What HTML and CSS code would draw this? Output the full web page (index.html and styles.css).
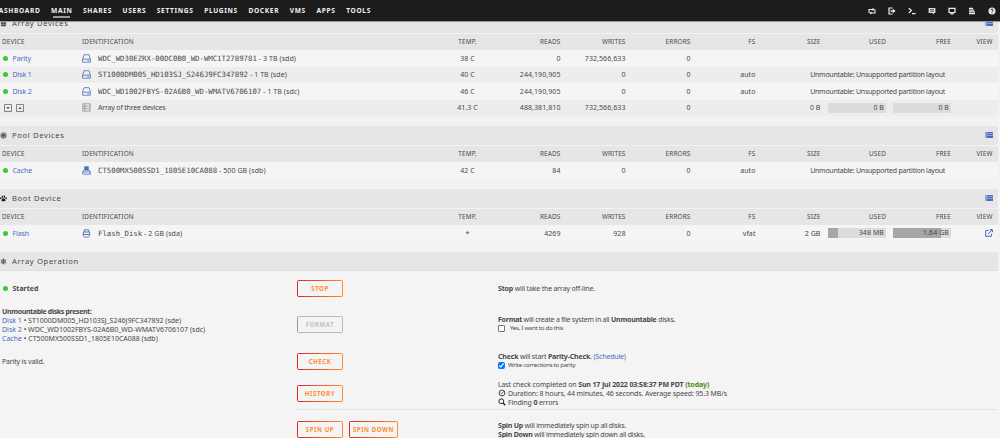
FILE: index.html
```html
<!DOCTYPE html>
<html lang="en">
<head>
    <meta charset="UTF-8">
    <title>Main</title>
    <link rel="stylesheet" href="styles.css">
</head>
<body>
<div class="header">
    <ul class="nav">
        <li>DASHBOARD</li>
        <li class="active">MAIN</li>
        <li>SHARES</li>
        <li>USERS</li>
        <li>SETTINGS</li>
        <li>PLUGINS</li>
        <li>DOCKER</li>
        <li>VMS</li>
        <li>APPS</li>
        <li>TOOLS</li>
    </ul>
    <div class="tools">
        <svg viewBox="0 0 8 8"><path d="M1 6V2.500h4.500M7 2.500v3.500H2.500" fill="none" stroke="#eee" stroke-width="1.1"/><path d="M4.600.8l2.200 1.700-2.200 1.600zM3.400 4.400L1.200 6l2.200 1.600z" fill="#eee"/></svg>
        <svg viewBox="0 0 8 8"><path d="M4.600 1H1v6h3.600" fill="none" stroke="#eee" stroke-width="1.2"/><path d="M2.600 3.200h2.200V1.700L7.600 4 4.800 6.300V4.800H2.600z" fill="#eee"/></svg>
        <svg viewBox="0 0 8 8"><path d="M.8 1.200L3.400 3.600.8 6M4 6.700h3.600" fill="none" stroke="#eee" stroke-width="1.2"/></svg>
        <svg viewBox="0 0 8 8"><path d="M.6 1h6.800v5H6v1.500L4.400 6H.6z" fill="#ddd"/><path d="M2 2.600h4M2 4.300h4" stroke="#1c1c1c" stroke-width=".7"/></svg>
        <svg viewBox="0 0 8 8"><path d="M1 1.300h6v4.200H1z" fill="none" stroke="#eee" stroke-width="1.2"/><path d="M2.200 6.200h3.600v1.200H2.200z" fill="#eee"/></svg>
        <svg viewBox="0 0 8 8"><path d="M1 1.300h4M1 3.100h5M1 4.900h6M1 6.700h6" stroke="#eee" stroke-width="1.3"/></svg>
        <svg viewBox="0 0 8 8"><circle cx="4" cy="4" r="3.500" fill="#eee"/><path d="M2.900 3.100c0-1.500 2.300-1.400 2.300 0C5.200 3.900 4 3.800 4 4.800M4 5.400v.9" fill="none" stroke="#1c1c1c" stroke-width=".9"/></svg>
    </div>
</div>

<div class="section array">
    <div class="title">
        <svg class="ico" viewBox="0 0 8 8"><path d="M1 2c0-1.600 6-1.600 6 0v4.400c0 1.400-6 1.400-6 0z" fill="#444"/><path d="M1 3.200h6M1 5.200h6" stroke="#e6e6e6" stroke-width=".5"/></svg>
        <span>Array Devices</span>
        <svg class="list" viewBox="0 0 8 6"><path d="M0 0h8v6H0z" fill="#8fa5d6"/><path d="M2 .5h6M2 2.500h6M2 4.500h6M2 5.500h6" stroke="#486dba"/></svg>
    </div>
    <div class="row thead">
        <span>DEVICE</span><span>IDENTIFICATION</span><span>TEMP.</span><span>READS</span><span>WRITES</span><span>ERRORS</span><span>FS</span><span>SIZE</span><span>USED</span><span>FREE</span><span>VIEW</span>
    </div>
    <div class="row">
        <span class="dev"><i class="orb"></i><a>Parity</a></span>
        <span class="id"><svg viewBox="0 0 9 9"><path d="M.6 5L2 .7h5L8.400 5M.6 5.200h7.800v3H.6zM5.500 6.700h1.700" fill="none" stroke="#486dba" stroke-width=".8"/></svg><b class="mono">WDC_WD30EZRX-00DC0B0_WD-WMC1T2789781</b> - 3 TB (sdd)</span>
        <span>38 C</span><span>0</span><span>732,566,633</span><span>0</span>
    </div>
    <div class="row even">
        <span class="dev"><i class="orb"></i><a>Disk 1</a></span>
        <span class="id"><svg viewBox="0 0 9 9"><path d="M.6 5L2 .7h5L8.400 5M.6 5.200h7.800v3H.6zM5.500 6.700h1.700" fill="none" stroke="#486dba" stroke-width=".8"/></svg><b class="mono">ST1000DM005_HD103SJ_S246J9FC347892</b> - 1 TB (sde)</span>
        <span>40 C</span><span>244,190,905</span><span>0</span><span>0</span><span>auto</span><span class="unmount">Unmountable: Unsupported partition layout</span>
    </div>
    <div class="row">
        <span class="dev"><i class="orb"></i><a>Disk 2</a></span>
        <span class="id"><svg viewBox="0 0 9 9"><path d="M.6 5L2 .7h5L8.400 5M.6 5.200h7.800v3H.6zM5.500 6.700h1.700" fill="none" stroke="#486dba" stroke-width=".8"/></svg><b class="mono">WDC_WD1002FBYS-02A6B0_WD-WMATV6706107</b> - 1 TB (sdc)</span>
        <span>46 C</span><span>244,190,905</span><span>0</span><span>0</span><span>auto</span><span class="unmount">Unmountable: Unsupported partition layout</span>
    </div>
    <div class="row even">
        <span class="dev toggles">
            <svg viewBox="0 0 8 8"><path d="M.5.5h7v7h-7z" fill="none" stroke="#777" stroke-width=".9"/><path d="M2.200 3h3.600L4 5.200z" fill="#666"/></svg>
            <svg viewBox="0 0 8 8"><path d="M.5.5h7v7h-7z" fill="none" stroke="#777" stroke-width=".9"/><path d="M2.200 5h3.600L4 2.800z" fill="#666"/></svg>
        </span>
        <span class="id"><svg viewBox="0 0 9 9"><path d="M.8.8h7.400v7.400H.8zM.8 3.300h7.400M.8 5.700h7.400M2.900.8v7.400" fill="none" stroke="#888" stroke-width=".7"/></svg><em>Array of three devices</em></span>
        <span>41.3 C</span><span>488,381,810</span><span>732,566,633</span><span>0</span><span></span><span>0 B</span>
        <span class="bar">0 B</span>
        <span class="bar">0 B</span>
    </div>
</div>

<div class="section">
    <div class="title">
        <svg class="ico" viewBox="0 0 8 8"><circle cx="4" cy="4" r="3.100" fill="#999" stroke="#555" stroke-width=".8"/><circle cx="4" cy="4" r="1.300" fill="#333"/></svg>
        <span>Pool Devices</span>
        <svg class="list" viewBox="0 0 8 6"><path d="M0 0h8v6H0z" fill="#8fa5d6"/><path d="M2 .5h6M2 2.500h6M2 4.500h6M2 5.500h6" stroke="#486dba"/></svg>
    </div>
    <div class="row thead">
        <span>DEVICE</span><span>IDENTIFICATION</span><span>TEMP.</span><span>READS</span><span>WRITES</span><span>ERRORS</span><span>FS</span><span>SIZE</span><span>USED</span><span>FREE</span><span>VIEW</span>
    </div>
    <div class="row">
        <span class="dev"><i class="orb"></i><a>Cache</a></span>
        <span class="id"><svg viewBox="0 0 9 9"><path d="M2.300.3h4.400v4.300H2.300z" fill="#486dba"/><path d="M2.300 3.500L.7 5.900v2.300h7.600V5.900L6.700 3.500M.7 6h7.600" fill="none" stroke="#486dba" stroke-width=".8"/></svg><b class="mono">CT500MX500SSD1_1805E10CA088</b> - 500 GB (sdb)</span>
        <span>42 C</span><span>84</span><span>0</span><span>0</span><span>auto</span><span class="unmount">Unmountable: Unsupported partition layout</span>
    </div>
</div>

<div class="section">
    <div class="title">
        <svg class="ico" viewBox="0 0 8 8"><path d="M4 3.700c1.200 0 2.400 1.600 2.400 2.700S5 7 4 7s-2.400.6-2.400-.6S2.800 3.700 4 3.700z" fill="#222"/><g fill="#222"><ellipse cx="1" cy="3.700" rx=".9" ry="1.200"/><ellipse cx="2.900" cy="2" rx=".9" ry="1.300"/><ellipse cx="5.100" cy="2" rx=".9" ry="1.300"/><ellipse cx="7" cy="3.700" rx=".9" ry="1.200"/></g></svg>
        <span>Boot Device</span>
        <svg class="list" viewBox="0 0 8 6"><path d="M0 0h8v6H0z" fill="#8fa5d6"/><path d="M2 .5h6M2 2.500h6M2 4.500h6M2 5.500h6" stroke="#486dba"/></svg>
    </div>
    <div class="row thead">
        <span>DEVICE</span><span>IDENTIFICATION</span><span>TEMP.</span><span>READS</span><span>WRITES</span><span>ERRORS</span><span>FS</span><span>SIZE</span><span>USED</span><span>FREE</span><span>VIEW</span>
    </div>
    <div class="row">
        <span class="dev"><i class="orb"></i><a>Flash</a></span>
        <span class="id"><svg viewBox="0 0 9 9"><path d="M2.300 3V.8h4.400V3M1.300 3h6.400v3.600c0 2.200-6.400 2.200-6.400 0zM1.300 5.500h6.400" fill="none" stroke="#486dba" stroke-width=".9"/></svg><b class="mono">Flash_Disk</b> - 2 GB (sda)</span>
        <span>*</span><span>4269</span><span>928</span><span>0</span><span>vfat</span><span>2 GB</span>
        <span class="bar"><i style="width: 18%"></i>348 MB</span>
        <span class="bar"><i style="width: 82%"></i>1.64 GB</span>
        <span class="open"><svg viewBox="0 0 8 8"><path d="M3.500 1.500H.7v5.800h5.700V4.600M3 5l4-4M4.700.6h2.700v2.700" fill="none" stroke="#486dba" stroke-width="1"/></svg></span>
    </div>
</div>

<div class="title op-title">
    <svg class="ico" viewBox="0 0 8 8"><path d="M4 .4v7.200M.9 2.200l6.200 3.600M7.100 2.200L.9 5.800" stroke="#444" stroke-width=".8"/><circle cx="4" cy="4" r="2.300" fill="none" stroke="#555" stroke-width=".8"/></svg>
    <span>Array Operation</span>
</div>
<div class="operation">
    <div class="op started">
        <div><i class="orb"></i><strong>Started</strong></div>
        <div><button>STOP</button></div>
        <div><p><strong>Stop</strong> will take the array off-line.</p></div>
    </div>
    <div class="op format">
        <div class="disks">
            <p class="warn"><strong>Unmountable disks present:</strong></p>
            <p><a>Disk 1</a> • ST1000DM005_HD103SJ_S246J9FC347892 (sde)</p>
            <p><a>Disk 2</a> • WDC_WD1002FBYS-02A6B0_WD-WMATV6706107 (sdc)</p>
            <p><a>Cache</a> • CT500MX500SSD1_1805E10CA088 (sdb)</p>
        </div>
        <div><button disabled>FORMAT</button></div>
        <div>
            <p><strong>Format</strong> will create a file system in all <strong>Unmountable</strong> disks.</p>
            <label><input type="checkbox"><small>Yes, I want to do this</small></label>
        </div>
    </div>
    <div class="op check">
        <div><p>Parity is valid.</p></div>
        <div><button>CHECK</button></div>
        <div>
            <p><strong>Check</strong> will start <strong>Parity-Check</strong>. <a>(Schedule)</a></p>
            <label><input type="checkbox" checked><small>Write corrections to parity</small></label>
        </div>
    </div>
    <div class="op history">
        <div></div>
        <div><button>HISTORY</button></div>
        <div>
            <p>Last check completed on <strong>Sun 17 Jul 2022 03:58:37 PM PDT <span class="green">(today)</span></strong></p>
            <p class="info"><svg viewBox="0 0 8 8"><circle cx="4" cy="4" r="2.900" fill="none" stroke="#333" stroke-width=".9"/><path d="M4 4.300L5.800 2.300M4 4.300H2.700" stroke="#333" stroke-width=".7"/></svg>Duration: 8 hours, 44 minutes, 46 seconds. Average speed: 95.3 MB/s</p>
            <p class="info"><svg viewBox="0 0 8 8"><circle cx="3.300" cy="3.300" r="2.400" fill="none" stroke="#222" stroke-width="1"/><path d="M5 5l2.300 2.300" stroke="#222" stroke-width="1.3"/></svg>Finding <strong>0</strong> errors</p>
        </div>
    </div>
    <div class="op spin">
        <div></div>
        <div><button>SPIN UP</button><button class="wide">SPIN DOWN</button></div>
        <div>
            <p><strong>Spin Up</strong> will immediately spin up all disks.</p>
            <p><strong>Spin Down</strong> will immediately spin down all disks.</p>
        </div>
    </div>
</div>
</body>
</html>
```

FILE: styles.css
```css
* {
    padding: 0;
    margin: 0;
    box-sizing: border-box;
    list-style: none;
}
body {
    height: 438px;
    overflow: hidden;
    background: #f2f2f2;
    color: #484848;
    font-family: "Noto Sans", sans-serif;
    font-size: 7px;
    line-height: 9px;
}
a {
    color: #486dba;
}
em, i {
    font-style: normal;
}
.header {
    position: relative;
    z-index: 1;
    display: flex;
    justify-content: space-between;
    height: 22px;
    padding-right: 4px;
    background: #1c1c1c;
    border-bottom: 1px solid #999;
}
.nav {
    display: flex;
    gap: 10.6px;
    margin-left: -6.7px;
    color: #f2f2f2;
    font-size: 6.6px;
    font-weight: bold;
    letter-spacing: .67px;
}
.nav li {
    height: 18px;
    padding-top: 6px;
}
.nav .active {
    background: linear-gradient(#999, #999) 2px 16px / 17px 2px no-repeat;
}
.tools {
    display: flex;
    gap: 12px;
    padding-top: 7px;
}
.tools svg {
    width: 8px;
    height: 8px;
}
.section {
    width: 998px;
    margin-bottom: 11px;
}
.section.array {
    margin-top: -8px;
    margin-bottom: 10.25px;
}
.title {
    display: flex;
    align-items: center;
    width: 998px;
    height: 19px;
    background: #e6e6e6;
    font-size: 7.6px;
    letter-spacing: .65px;
}
.title .ico {
    width: 7px;
    height: 7px;
    margin-right: 5px;
}
.title .list {
    width: 8px;
    height: 6px;
    margin: 0 5px 1px auto;
}
.row {
    display: grid;
    grid-template-columns: 80px 348px 75px 55.5px 65px 65px 65px 65px 65.5px 65px 41.5px;
    align-items: center;
    height: 16px;
    padding-left: 2px;
    background: #f5f5f5;
    text-align: right;
    letter-spacing: .08px;
}
.array .row {
    height: 16.5px;
}
.row.even {
    background: #ededed;
}
.section .thead {
    height: 16px;
    margin-top: 1px;
    padding-bottom: 1px;
    background: #e6e6e6;
    font-size: 6.4px;
    letter-spacing: .15px;
}
.row > :nth-child(1),
.row > :nth-child(2) {
    text-align: left;
}
.row > :nth-child(3) {
    text-align: center;
}
.orb {
    flex: none;
    width: 5px;
    height: 5px;
    margin: 0 4.5px 0 1px;
    border-radius: 50%;
    background: #33cc33;
}
.row .dev {
    display: flex;
    align-items: center;
    letter-spacing: -.1px;
}
.row .toggles {
    gap: 4px;
    padding-left: 2px;
}
.toggles svg {
    width: 8px;
    height: 8px;
}
.id {
    display: flex;
    align-items: center;
    white-space: pre;
}
.id svg {
    width: 9px;
    height: 9px;
    margin-right: 7px;
}
.id em {
    letter-spacing: -.18px;
}
.mono {
    font-family: "DejaVu Sans Mono", monospace;
    font-size: 7.33px;
    font-weight: normal;
    letter-spacing: 0;
}
.row .unmount {
    grid-column: 8 / 11;
    padding-right: 6px;
    letter-spacing: -.25px;
}
.bar {
    position: relative;
    z-index: 0;
    height: 10px;
    margin-left: 7px;
    padding-right: 2px;
    background: #dcdcdc;
}
.bar i {
    position: absolute;
    z-index: -1;
    left: 0;
    top: 0;
    height: 10px;
    background: #a6a6a6;
}
.open svg {
    display: block;
    width: 8px;
    height: 8px;
    margin-left: auto;
}
.op-title {
    border-bottom: 1px solid #e0e0e0;
}
.operation {
    background: #f4f4f4;
}
.op {
    display: grid;
    grid-template-columns: 295px 201px 1fr;
    align-items: center;
    height: 36px;
    padding-left: 2px;
    white-space: nowrap;
}
.op p {
    letter-spacing: -.17px;
}
.op .disks p {
    letter-spacing: 0;
}
.op .disks .warn {
    letter-spacing: -.34px;
}
.op button {
    width: 46px;
    height: 17px;
    border: 0;
    border-radius: 2px;
    background: linear-gradient(90deg, #e22828, #ff8c2f) 0 0 / 100% 1px no-repeat,
        linear-gradient(90deg, #e22828, #ff8c2f) 0 100% / 100% 1px no-repeat,
        linear-gradient(#e22828, #e22828) 0 0 / 1px 100% no-repeat,
        linear-gradient(#ff8c2f, #ff8c2f) 100% 0 / 1px 100% no-repeat;
    color: #ff8c2f;
    font: bold 6.1px/17px "Noto Sans", sans-serif;
    letter-spacing: .55px;
    vertical-align: top;
}
.op button:disabled {
    background: none;
    border: 1px solid #b8b8b8;
    border-left-color: #999;
    color: #c0c0c0;
    line-height: 15px;
}
.op button.wide {
    width: 49px;
    margin-left: 6px;
}
.op label {
    display: flex;
    align-items: center;
    height: 10px;
}
.op input {
    width: 7px;
    height: 7px;
    margin-right: 3px;
}
.op small {
    font-size: 6px;
    letter-spacing: -.23px;
}
.op.started {
    height: 35px;
}
.started > :first-child {
    display: flex;
    align-items: center;
}
.op.format {
    height: 37px;
}
.format > :last-child {
    padding-bottom: 1px;
}
.format > :last-child p {
    letter-spacing: -.23px;
}
.format input {
    appearance: none;
    margin-right: 5px;
    border: 1px solid #767676;
    border-radius: 1px;
    background: #fff;
}
.green {
    color: #4f8a10;
}
.op.history {
    height: 30px;
    padding-bottom: 2px;
}
.history p {
    letter-spacing: -.12px;
}
.info {
    display: flex;
    align-items: center;
    white-space: pre;
}
.info svg {
    width: 8px;
    height: 8px;
    margin-right: 2px;
}
.op.spin {
    height: 40px;
    background: linear-gradient(#e2e2e2, #e2e2e2) 296px 0 / 702px 1px no-repeat;
}
.spin > :last-child {
    padding-top: 2px;
}
.spin p {
    letter-spacing: -.22px;
}
```
